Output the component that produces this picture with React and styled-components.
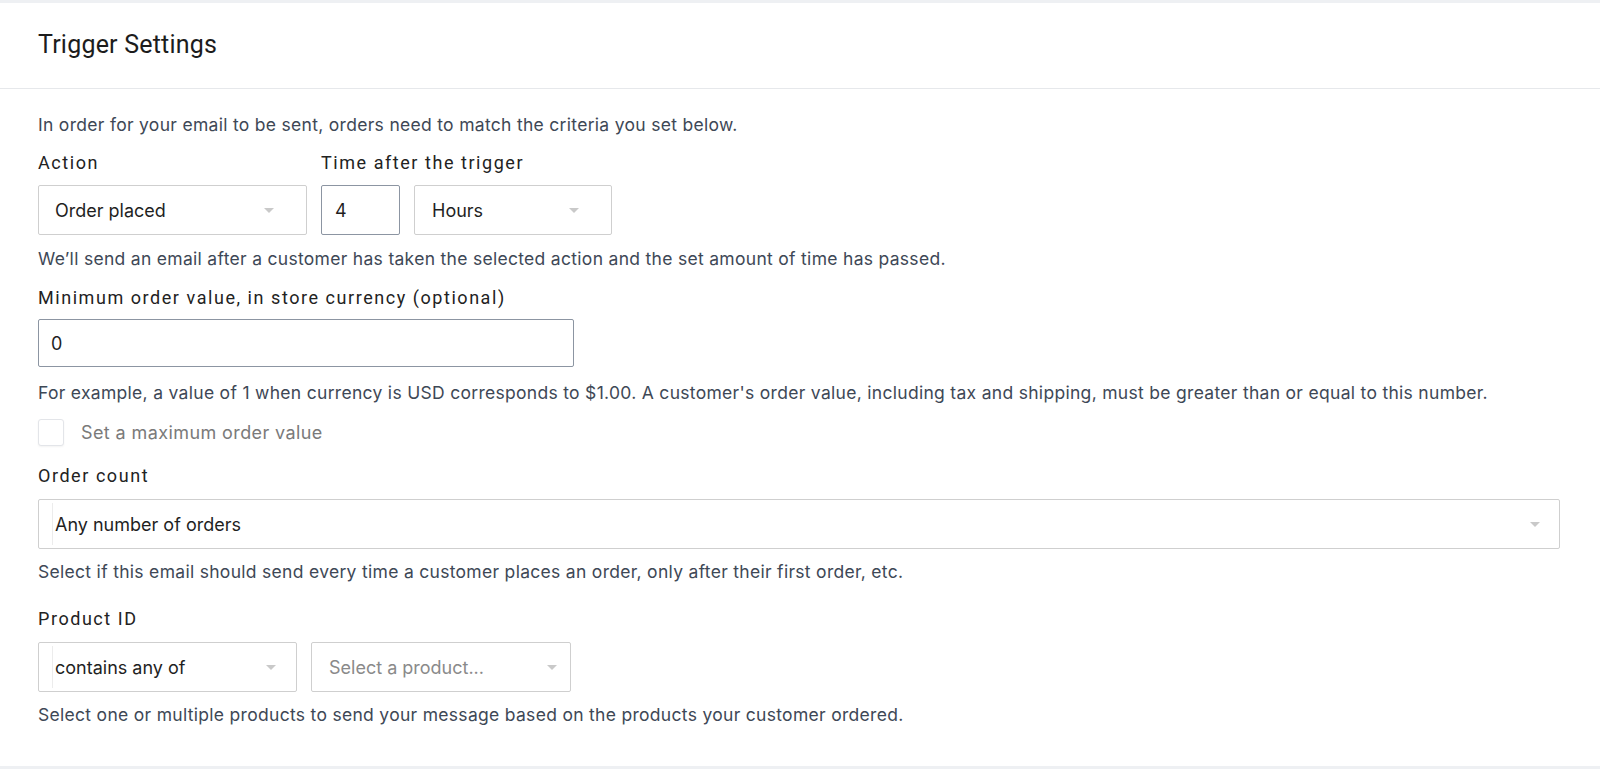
import React from "react";
import styled, { createGlobalStyle } from "styled-components";

const GlobalStyle = createGlobalStyle`
  html, body {
    margin: 0;
    padding: 0;
    background: #fff;
  }
  * {
    box-sizing: border-box;
  }
`;

const Card = styled.section`
  width: 100%;
  height: 769px;
  border-top: 3px solid #eef0f3;
  border-bottom: 3px solid #eef0f3;
  display: flex;
  flex-direction: column;
`;

const Header = styled.header`
  height: 86px;
  padding: 0 38px;
  display: flex;
  align-items: center;
  border-bottom: 1px solid #e6e8eb;
`;

const Title = styled.h2`
  margin: 0;
  padding-bottom: 2px;
  font-family: Roboto, "Liberation Sans", sans-serif;
  font-weight: 400;
  font-size: 25px;
  letter-spacing: 0.2px;
  color: #1c1c1c;
`;

const Body = styled.div`
  flex: 1;
  padding: 24px 40px 0 38px;
`;

const Help = styled.p`
  margin: 0;
  margin-top: ${(p) => p.$top || 0}px;
  font-family: Inter, "Liberation Sans", sans-serif;
  font-size: 17.5px;
  line-height: 24px;
  letter-spacing: 0.3px;
  color: #3e4856;
`;

const Label = styled.div`
  margin-top: ${(p) => p.$top || 0}px;
  font-family: Roboto, "Liberation Sans", sans-serif;
  font-size: 18px;
  line-height: 24px;
  letter-spacing: 1.55px;
  color: #222;
`;

const Row = styled.div`
  display: flex;
  gap: ${(p) => p.$gap || 14}px;
  margin-top: ${(p) => p.$top || 0}px;
`;

const Column = styled.div`
  display: flex;
  flex-direction: column;
`;

const SelectBox = styled.div`
  position: relative;
  width: ${(p) => (p.$width ? `${p.$width}px` : "100%")};
  height: 50px;
  border: 1px solid #cfcfcf;
  border-radius: 2px;
  background: #fff;
  display: flex;
  align-items: center;
  padding-left: ${(p) => p.$pad || 16}px;
  font-family: Inter, "Liberation Sans", sans-serif;
  font-size: 18px;
  color: ${(p) => (p.$placeholder ? "#8a8a8a" : "#1f1f1f")};
`;

const Cursor = styled.span`
  position: absolute;
  left: 13px;
  top: 3px;
  bottom: 3px;
  width: 1px;
  background: #ececec;
`;

const Arrow = styled.span`
  position: absolute;
  top: 50%;
  right: ${(p) => p.$right || 30}px;
  margin-top: -2px;
  width: 0;
  height: 0;
  border-left: 5px solid transparent;
  border-right: 5px solid transparent;
  border-top: 5px solid #c9c9c9;
`;

const TextInput = styled.div`
  width: ${(p) => p.$width}px;
  height: ${(p) => p.$height || 48}px;
  border: 1px solid #8c95a2;
  border-radius: 2px;
  display: flex;
  align-items: center;
  padding-left: ${(p) => p.$pad || 12}px;
  font-family: Inter, "Liberation Sans", sans-serif;
  font-size: 18px;
  color: #1f1f1f;
`;

const CheckRow = styled.label`
  display: flex;
  align-items: center;
  gap: 17px;
  margin-top: 14px;
  font-family: Inter, "Liberation Sans", sans-serif;
  font-size: 18px;
  letter-spacing: 0.4px;
  color: #7a7a7a;
`;

const CheckBox = styled.span`
  width: 26px;
  height: 27px;
  border: 1px solid #e3e5e9;
  border-radius: 3px;
  background: #fff;
  box-shadow: 0 1px 2px rgba(0, 0, 0, 0.05);
`;

function Select({ value, width, placeholder, cursor, arrowRight, pad }) {
  return (
    <SelectBox $width={width} $placeholder={placeholder} $pad={pad}>
      {cursor && <Cursor />}
      {value}
      <Arrow $right={arrowRight} />
    </SelectBox>
  );
}

export default function App() {
  return (
    <>
      <GlobalStyle />
      <Card>
        <Header>
          <Title>Trigger Settings</Title>
        </Header>
        <Body>
          <Help>
            In order for your email to be sent, orders need to match the criteria you set below.
          </Help>

          <Row $top={14} $gap={14}>
            <Column>
              <Label>Action</Label>
              <Row $top={10}>
                <Select value="Order placed" width={269} arrowRight={32} />
              </Row>
            </Column>
            <Column>
              <Label>Time after the trigger</Label>
              <Row $top={10}>
                <TextInput $width={79} $height={50} $pad={13}>4</TextInput>
                <Select value="Hours" width={198} pad={17} arrowRight={32} />
              </Row>
            </Column>
          </Row>
          <Help $top={12}>
            We’ll send an email after a customer has taken the selected action and the set amount of time has passed.
          </Help>

          <Label $top={15}>Minimum order value, in store currency (optional)</Label>
          <Row $top={9}>
            <TextInput $width={536}>0</TextInput>
          </Row>
          <Help $top={14}>
            For example, a value of 1 when currency is USD corresponds to $1.00. A customer's order value, including tax and shipping, must be greater than or equal to this number.
          </Help>
          <CheckRow>
            <CheckBox />
            Set a maximum order value
          </CheckRow>

          <Label $top={18}>Order count</Label>
          <Row $top={11}>
            <Select value="Any number of orders" cursor arrowRight={19} />
          </Row>
          <Help $top={11}>
            Select if this email should send every time a customer places an order, only after their first order, etc.
          </Help>

          <Label $top={23}>Product ID</Label>
          <Row $top={11} $gap={14}>
            <Select value="contains any of" width={259} cursor arrowRight={20} />
            <Select value="Select a product..." width={260} placeholder pad={17} arrowRight={13} />
          </Row>
          <Help $top={11}>
            Select one or multiple products to send your message based on the products your customer ordered.
          </Help>
        </Body>
      </Card>
    </>
  );
}
